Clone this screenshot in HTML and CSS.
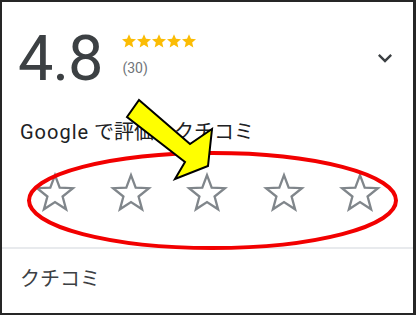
FILE: index.html
```html
<!DOCTYPE html>
<html lang="ja">
<head>
<meta charset="utf-8">
<link rel="stylesheet" href="styles.css">
</head>
<body>
<div class="frame">
  <div class="summary">
    <div class="score">4.8</div>
    <div class="meta">
      <div class="mini-stars">
        <svg viewBox="2 2 20 19.5" class="mini"><path d="M12 17.27L18.18 21l-1.64-7.03L22 9.24l-7.19-.61L12 2 9.19 8.63 2 9.24l5.46 4.73L5.82 21z"/></svg>
        <svg viewBox="2 2 20 19.5" class="mini"><path d="M12 17.27L18.18 21l-1.64-7.03L22 9.24l-7.19-.61L12 2 9.19 8.63 2 9.24l5.46 4.73L5.82 21z"/></svg>
        <svg viewBox="2 2 20 19.5" class="mini"><path d="M12 17.27L18.18 21l-1.64-7.03L22 9.24l-7.19-.61L12 2 9.19 8.63 2 9.24l5.46 4.73L5.82 21z"/></svg>
        <svg viewBox="2 2 20 19.5" class="mini"><path d="M12 17.27L18.18 21l-1.64-7.03L22 9.24l-7.19-.61L12 2 9.19 8.63 2 9.24l5.46 4.73L5.82 21z"/></svg>
        <svg viewBox="2 2 20 19.5" class="mini"><path d="M12 17.27L18.18 21l-1.64-7.03L22 9.24l-7.19-.61L12 2 9.19 8.63 2 9.24l5.46 4.73L5.82 21z"/></svg>
      </div>
      <div class="count">(30)</div>
    </div>
    <svg class="chev" viewBox="0 0 24 24"><path d="M16.59 8.59L12 13.17 7.41 8.59 6 10l6 6 6-6z"/></svg>
  </div>

  <div class="rate">
    <div class="rate-title"><span class="brand">Google</span> で評価・クチコミ</div>
    <div class="rate-stars">
      <svg class="big" viewBox="0 0 40 40"><polygon points="20,3 24.47,14.85 37.12,15.44 27.23,23.35 30.58,35.56 20,28.6 9.42,35.56 12.77,23.35 2.88,15.44 15.53,14.85"/></svg>
      <svg class="big" viewBox="0 0 40 40"><polygon points="20,3 24.47,14.85 37.12,15.44 27.23,23.35 30.58,35.56 20,28.6 9.42,35.56 12.77,23.35 2.88,15.44 15.53,14.85"/></svg>
      <svg class="big" viewBox="0 0 40 40"><polygon points="20,3 24.47,14.85 37.12,15.44 27.23,23.35 30.58,35.56 20,28.6 9.42,35.56 12.77,23.35 2.88,15.44 15.53,14.85"/></svg>
      <svg class="big" viewBox="0 0 40 40"><polygon points="20,3 24.47,14.85 37.12,15.44 27.23,23.35 30.58,35.56 20,28.6 9.42,35.56 12.77,23.35 2.88,15.44 15.53,14.85"/></svg>
      <svg class="big" viewBox="0 0 40 40"><polygon points="20,3 24.47,14.85 37.12,15.44 27.23,23.35 30.58,35.56 20,28.6 9.42,35.56 12.77,23.35 2.88,15.44 15.53,14.85"/></svg>
    </div>
  </div>

  <div class="divider"></div>

  <div class="reviews">クチコミ</div>

  <svg class="annot" viewBox="0 0 411 311">
    <ellipse cx="210.5" cy="198.5" rx="183.5" ry="47.5" class="ring"/>
    <polygon class="arrow" points="137,98 188,142 210,127 206,164 173,177 183,160 125,115"/>
  </svg>
</div>
</body>
</html>
```

FILE: styles.css
```css
* { box-sizing: border-box; }

html, body {
  margin: 0;
  padding: 0;
  background: #262626;
}

body {
  width: 416px;
  height: 315px;
  padding: 2px 3px 2px 2px;
  font-family: Roboto, "Noto Sans CJK JP", sans-serif;
}

.frame {
  position: relative;
  width: 411px;
  height: 311px;
  background: #ffffff;
  display: flex;
  flex-direction: column;
  overflow: hidden;
}

.summary {
  display: flex;
  align-items: flex-start;
  padding: 25px 14px 0 16px;
  height: 118px;
  flex-shrink: 0;
}

.score {
  font-size: 63px;
  line-height: 63px;
  color: #3c4043;
  letter-spacing: -1px;
}

.meta {
  margin-left: 20px;
  padding-top: 7px;
  display: flex;
  flex-direction: column;
}

.mini-stars {
  display: flex;
  gap: 1px;
}

.mini {
  width: 14px;
  height: 14px;
  fill: #fbbc04;
}

.count {
  margin-top: 12px;
  font-size: 14px;
  line-height: 16px;
  color: #70757a;
}

.chev {
  margin-left: auto;
  margin-top: 17px;
  width: 28px;
  height: 28px;
  fill: #3c4043;
}

.rate {
  display: flex;
  flex-direction: column;
  flex-shrink: 0;
}

.rate-title {
  padding-left: 18px;
  font-size: 20px;
  line-height: 24px;
  color: #202124;
}

.brand {
  letter-spacing: 1px;
}

.rate-stars {
  display: grid;
  grid-template-columns: repeat(5, 1fr);
  justify-items: center;
  padding: 28px 15px 0 15px;
}

.big {
  width: 42px;
  height: 42px;
  fill: none;
  stroke: #80868b;
  stroke-width: 2.2;
  stroke-linejoin: miter;
}

.divider {
  margin-top: 33px;
  height: 2px;
  background: #e8eaed;
  flex-shrink: 0;
}

.reviews {
  padding: 18px 0 0 18px;
  font-size: 20px;
  line-height: 24px;
  color: #3c4043;
}

.annot {
  position: absolute;
  left: 0;
  top: 0;
  width: 411px;
  height: 311px;
  pointer-events: none;
}

.ring {
  fill: none;
  stroke: #f20000;
  stroke-width: 4;
}

.arrow {
  fill: #ffff00;
  stroke: #000000;
  stroke-width: 2;
  stroke-linejoin: miter;
}
```
